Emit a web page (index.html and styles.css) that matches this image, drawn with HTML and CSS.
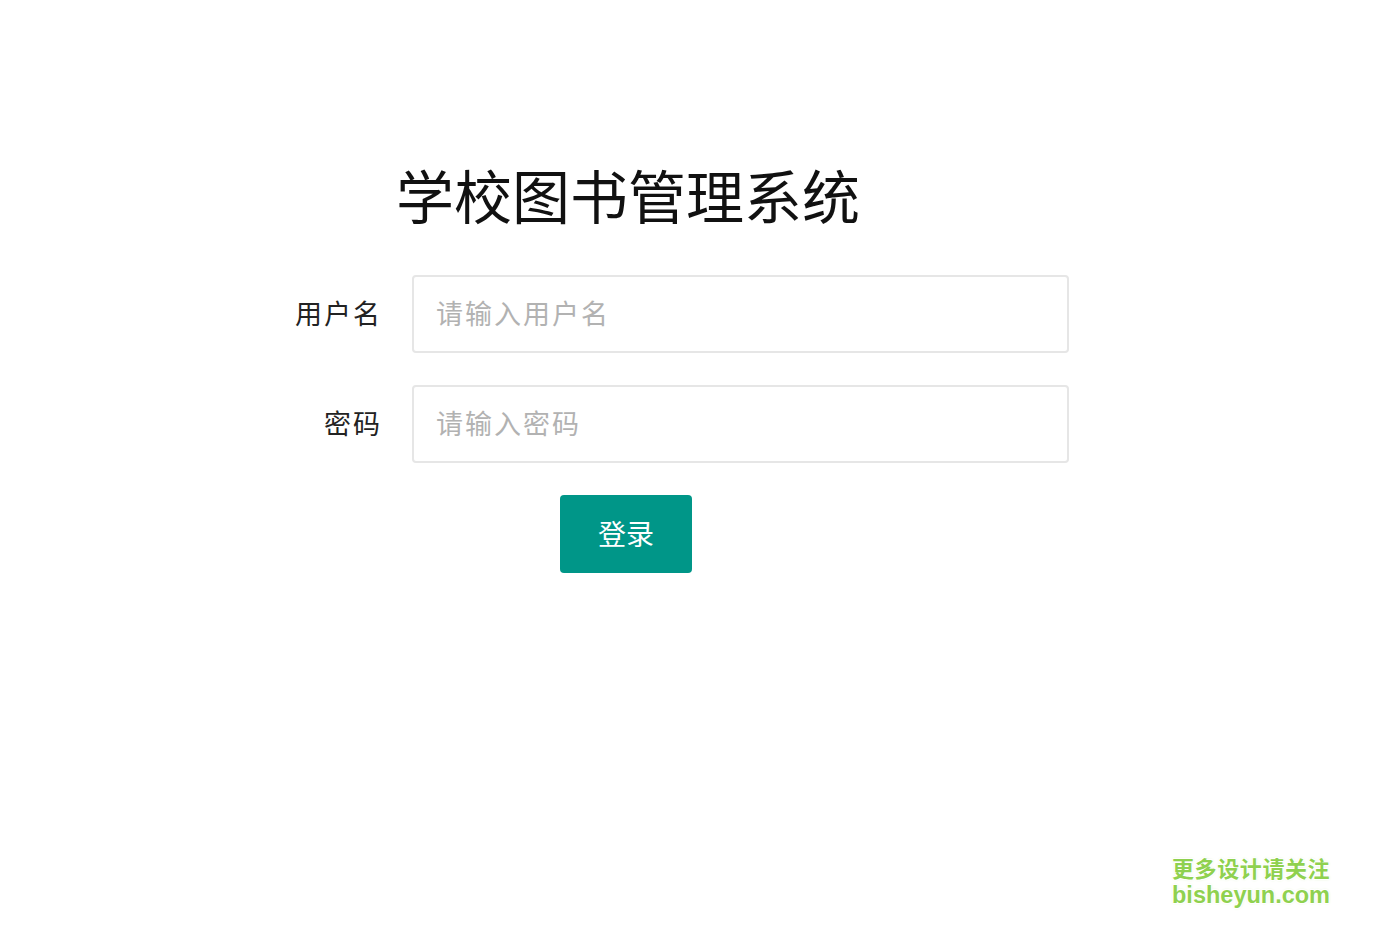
FILE: index.html
```html
<!DOCTYPE html>
<html lang="zh-CN">

<head>
    <meta charset="UTF-8" />
    <title>学校图书管理系统</title>
    <link rel="stylesheet" href="styles.css">
</head>

<body>

    <div class="login">
        <h1 class="login-title">学校图书管理系统</h1>

        <!-- 用户名 -->
        <div class="form-item">
            <label class="form-label" for="username">用户名</label>
            <input class="form-input" id="username" type="text" placeholder="请输入用户名">
        </div>

        <!-- 密码 -->
        <div class="form-item">
            <label class="form-label" for="password">密码</label>
            <input class="form-input" id="password" type="password" placeholder="请输入密码">
        </div>

        <button class="btn-login" type="button">登录</button>
    </div>

    <!-- 水印 -->
    <div class="watermark">
        <div class="wm-cn">更多设计请关注</div>
        <div class="wm-en">bisheyun.com</div>
    </div>

</body>

</html>
```

FILE: styles.css
```css
body {
    margin: 0;
    background: #fff;
    font-family: "Noto Sans CJK SC", "Noto Sans", sans-serif;
    color: #222;
}

.login {
    width: 877px;
    margin-left: 192px;
    padding-top: 165px;
}

.login-title {
    margin: 0 0 52px 204px;
    font-size: 58px;
    line-height: 58px;
    font-weight: 400;
    color: #111;
}

/* 表单行 */
.form-item {
    display: flex;
    align-items: center;
    margin-bottom: 32px;
}

.form-label {
    width: 190px;
    padding-right: 30px;
    padding-bottom: 4px;
    text-align: right;
    font-size: 27px;
    letter-spacing: 2px;
    color: #222;
}

.form-input {
    box-sizing: border-box;
    width: 657px;
    height: 78px;
    padding: 0 22px 3px;
    border: 2px solid #e6e6e6;
    border-radius: 4px;
    font-family: "Noto Sans CJK SC", sans-serif;
    font-size: 27px;
    color: #333;
    outline: none;
}

.form-input::placeholder {
    color: #b2b2b2;
    letter-spacing: 2px;
}

/* 登录按钮 */
.btn-login {
    display: block;
    width: 132px;
    height: 78px;
    margin-left: 368px;
    padding-bottom: 3px;
    border: none;
    border-radius: 4px;
    background: #009688;
    color: #fff;
    font-family: "Noto Sans CJK SC", sans-serif;
    font-size: 28px;
    cursor: pointer;
}

/* 右下角水印 */
.watermark {
    position: absolute;
    left: 1172px;
    top: 852px;
    color: #8fd14f;
    font-weight: 700;
    text-shadow: 1px 1px 0 #fff, -1px -1px 0 #fff, 1px -1px 0 #fff, -1px 1px 0 #fff, 0 0 3px #cfe9b4;
}

.wm-cn {
    font-family: "Noto Sans CJK SC", sans-serif;
    font-size: 22px;
    line-height: 30px;
    letter-spacing: 0.6px;
}

.wm-en {
    font-family: "Liberation Sans", Arial, sans-serif;
    font-size: 23.5px;
    line-height: 26px;
}
```
